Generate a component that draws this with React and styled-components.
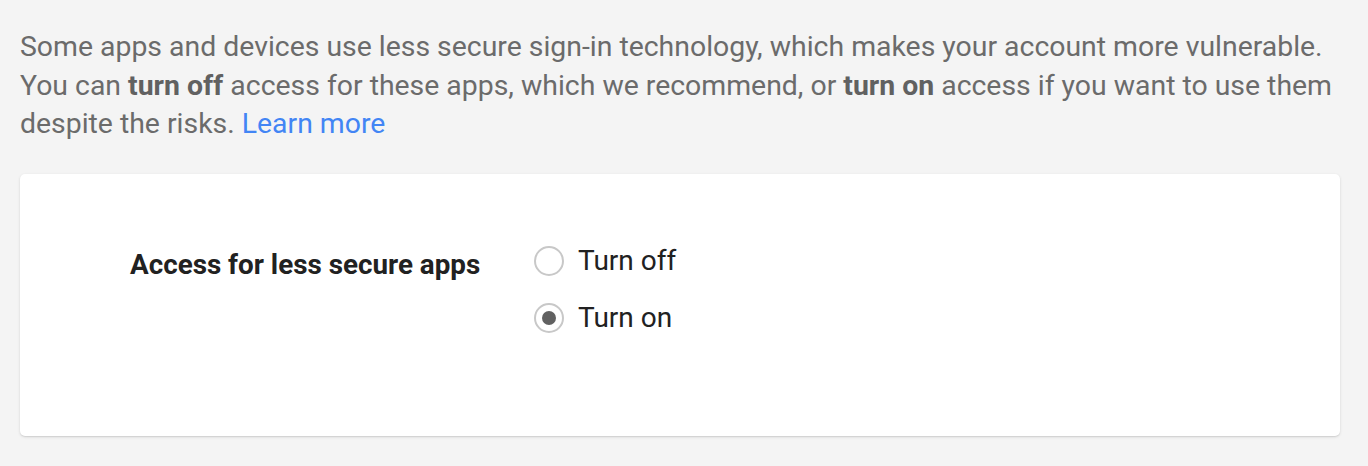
import React from 'react'
import styled, { createGlobalStyle } from 'styled-components'

const GlobalStyle = createGlobalStyle`
    html, body {
        margin: 0;
        padding: 0;
        background: #f4f4f4;
        font-family: Roboto, "Liberation Sans", Arial, sans-serif;
    }
`
const Page = styled.main`
    padding: 28px 28px 30px 20px;
`
const Intro = styled.p`
    margin: 0 0 30px;
    font-size: 28.4px;
    line-height: 38.5px;
    color: #6b6b6b;
    b {
        font-weight: 700;
        color: #616161;
    }
`
const Link = styled.a`
    color: #4285f4;
    text-decoration: none;
`
const Card = styled.section`
    background: #fff;
    border-radius: 5px;
    box-shadow: 0 1px 3px rgba(0, 0, 0, 0.12), 0 1px 1px rgba(0, 0, 0, 0.06);
    height: 262px;
    box-sizing: border-box;
    padding: 68px 110px 0;
    display: flex;
    align-items: flex-start;
`
const Label = styled.h3`
    margin: 0;
    width: 404px;
    padding-top: 4px;
    font-size: 27.8px;
    font-weight: 700;
    color: #212121;
    line-height: 38px;
`
const Options = styled.div`
    display: flex;
    flex-direction: column;
    gap: 27px;
    padding-top: 4px;
`
const Option = styled.label`
    display: flex;
    align-items: center;
    gap: 14px;
    font-size: 28px;
    color: #212121;
    height: 30px;
    cursor: pointer;
`
const Circle = styled.span`
    width: 30px;
    height: 30px;
    box-sizing: border-box;
    border: 2px solid #c8c8c8;
    border-radius: 50%;
    display: flex;
    align-items: center;
    justify-content: center;
    &::after {
        content: '';
        width: 14px;
        height: 14px;
        border-radius: 50%;
        background: ${p => (p.$checked ? '#616161' : 'transparent')};
    }
`

export default function App() {
    return (
        <Page>
            <GlobalStyle />
            <Intro>
                Some apps and devices use less secure sign-in technology, which makes your account more vulnerable.
                You can <b>turn off</b> access for these apps, which we recommend, or <b>turn on</b> access if you want
                to use them despite the risks. <Link href="#">Learn more</Link>
            </Intro>
            <Card>
                <Label>Access for less secure apps</Label>
                <Options>
                    <Option>
                        <Circle />
                        Turn off
                    </Option>
                    <Option>
                        <Circle $checked />
                        Turn on
                    </Option>
                </Options>
            </Card>
        </Page>
    )
}
